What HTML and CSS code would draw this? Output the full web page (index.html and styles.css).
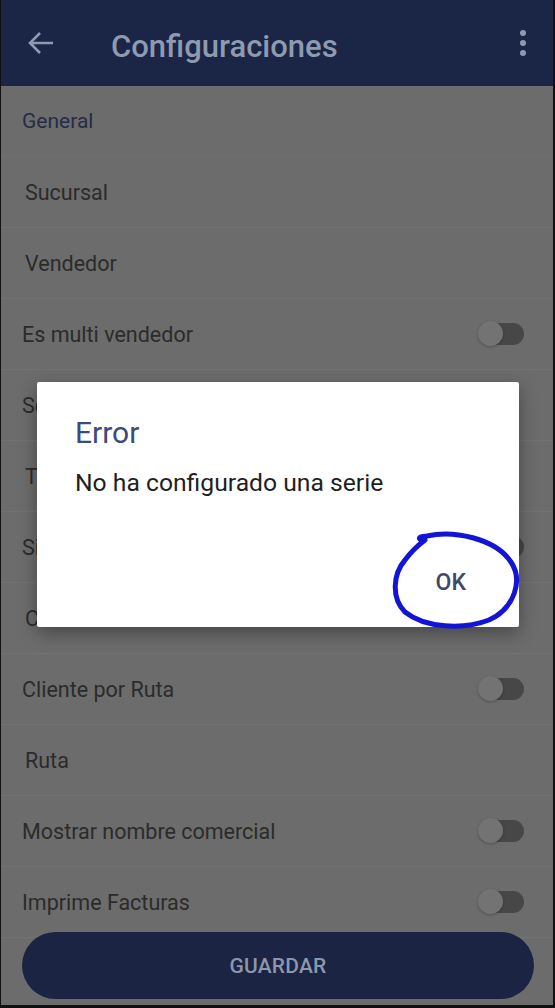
FILE: index.html
```html
<!DOCTYPE html>
<html lang="es">
<head>
    <meta charset="UTF-8">
    <meta name="viewport" content="width=device-width, initial-scale=1.0">
    <title>Configuraciones</title>
    <link rel="stylesheet" href="styles.css">
</head>
<body>
    <div class="screen">
        <header class="appbar">
            <svg class="back" width="28" height="24" viewBox="0 0 28 24">
                <path d="M26 12H3M13 2L3 12l10 10" fill="none" stroke="#8e9ab0" stroke-width="2.6"/>
            </svg>
            <h1>Configuraciones</h1>
            <div class="kebab">
                <span></span><span></span><span></span>
            </div>
        </header>

        <div class="list">
            <div class="row section">General</div>
            <div class="row"><span class="pad">Sucursal</span></div>
            <div class="row"><span class="pad">Vendedor</span></div>
            <div class="row">Es multi vendedor <i class="switch"></i></div>
            <div class="row">Serie</div>
            <div class="row"><span class="pad">Tipo</span></div>
            <div class="row">Sincronizar automático <i class="switch"></i></div>
            <div class="row"><span class="pad">Cobrador</span></div>
            <div class="row">Cliente por Ruta <i class="switch"></i></div>
            <div class="row"><span class="pad">Ruta</span></div>
            <div class="row">Mostrar nombre comercial <i class="switch"></i></div>
            <div class="row">Imprime Facturas <i class="switch"></i></div>
        </div>

        <div class="footer">
            <button class="save">GUARDAR</button>
        </div>

        <div class="dialog">
            <h2>Error</h2>
            <p>No ha configurado una serie</p>
            <div class="actions">
                <button class="ok">OK</button>
                <svg class="mark" width="130" height="100" viewBox="0 0 130 100">
                    <path d="M30 10C26 8 30 6 36 6C62 0 104 8 120 32C132 50 124 78 98 90C72 100 34 98 14 82C0 68 2 44 14 30C20 22 26 16 34 10" fill="none" stroke="#1414d6" stroke-width="5" stroke-linecap="round" stroke-linejoin="round"/>
                </svg>
            </div>
        </div>
    </div>
</body>
</html>
```

FILE: styles.css
```css
html, body {
    margin: 0;
    padding: 0;
    background: #111;
}
body {
    font-family: Roboto, 'Noto Sans', sans-serif;
}
.screen {
    position: relative;
    width: 552px;
    height: 1005px;
    margin-left: 1px;
    background: #6c6c6c;
    overflow: hidden;
}
.appbar {
    height: 86px;
    background: #1b2545;
    display: flex;
    align-items: center;
    padding: 0 0 0 26px;
    box-sizing: border-box;
}
.appbar h1 {
    margin: 0 0 0 56px;
    padding-top: 6px;
    flex: 1;
    font-size: 31px;
    font-weight: 500;
    color: #8e9ab0;
}
.kebab {
    display: flex;
    flex-direction: column;
    gap: 4px;
    margin-right: 27px;
}
.kebab span {
    width: 6px;
    height: 6px;
    border-radius: 50%;
    background: #8e9ab0;
}
.list {
    display: flex;
    flex-direction: column;
}
.row {
    height: 71px;
    display: flex;
    align-items: center;
    justify-content: space-between;
    padding: 0 29px 0 21px;
    border-bottom: 1px solid #727272;
    box-sizing: border-box;
    font-size: 21.5px;
    color: #2b2b2b;
}
.row .pad {
    padding-left: 3px;
}
.section {
    color: #272c46;
    font-size: 21px;
    border-bottom-color: #6f6f6f;
}
.switch {
    position: relative;
    width: 46px;
    height: 24px;
}
.switch::before {
    content: "";
    position: absolute;
    right: 0;
    top: 1px;
    width: 36px;
    height: 22px;
    border-radius: 11px;
    background: #474747;
}
.switch::after {
    content: "";
    position: absolute;
    left: 0;
    top: -1px;
    width: 25px;
    height: 25px;
    border-radius: 50%;
    background: #737373;
    box-shadow: 0 1px 3px rgba(0,0,0,0.25);
}
.footer {
    position: absolute;
    left: 21px;
    right: 19px;
    bottom: 6px;
}
.save {
    width: 100%;
    height: 67px;
    border: none;
    border-radius: 34px;
    background: #1b2442;
    color: #8c97ad;
    font-family: inherit;
    font-size: 21px;
    font-weight: 500;
    letter-spacing: 0.2px;
}
.dialog {
    position: absolute;
    left: 36px;
    top: 382px;
    width: 482px;
    height: 245px;
    background: #fff;
    border-radius: 2px;
    box-shadow: 0 6px 18px rgba(0,0,0,0.35);
    padding: 33px 38px 0;
    box-sizing: border-box;
}
.dialog h2 {
    margin: 0;
    font-size: 30px;
    line-height: 35px;
    font-weight: 400;
    color: #3c4a7d;
}
.dialog p {
    margin: 19px 0 0;
    font-size: 24.7px;
    line-height: 28px;
    color: #1f1f1f;
}
.actions {
    position: relative;
    display: flex;
    justify-content: flex-end;
    margin-top: 66px;
}
.ok {
    border: none;
    background: none;
    font-family: inherit;
    font-size: 23px;
    line-height: 27px;
    font-weight: 500;
    color: #3f4868;
    padding: 6px 14px;
    margin-right: 1px;
}
.mark {
    position: absolute;
    right: -40px;
    top: -33px;
}
```
